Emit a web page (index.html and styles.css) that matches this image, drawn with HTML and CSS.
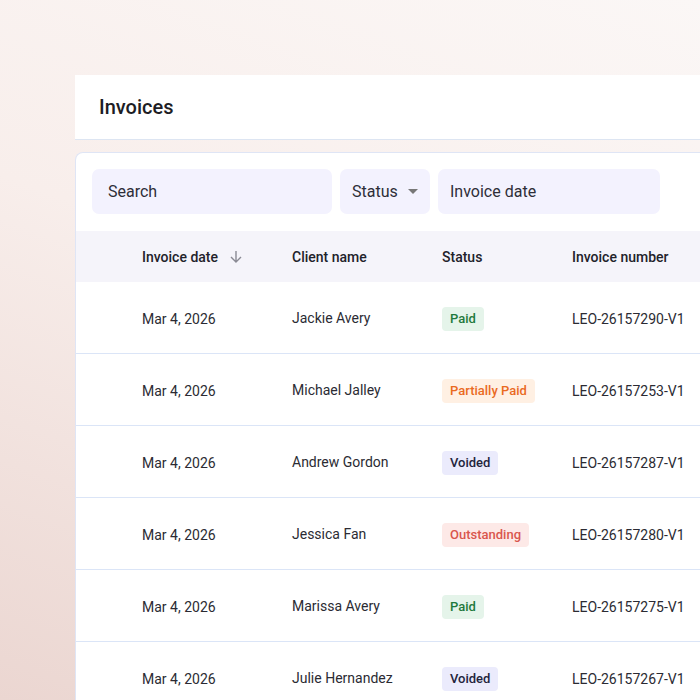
FILE: index.html
```html
<!DOCTYPE html>
<html lang="en">
<head>
    <meta charset="UTF-8">
    <meta name="viewport" content="width=device-width, initial-scale=1.0">
    <title>Invoices</title>
    <link rel="stylesheet" href="styles.css">
</head>
<body>
    <div class="page">
        <div class="topbar">
            <h1>Invoices</h1>
        </div>
        <div class="card">
            <div class="filters">
                <div class="field search">Search</div>
                <div class="field status">
                    Status
                    <svg width="10" height="6" viewBox="0 0 10 6"><path d="M0 0h10L5 5z" fill="#777"/></svg>
                </div>
                <div class="field date">Invoice date</div>
            </div>
            <div class="table">
                <div class="row head">
                    <div class="cell sortable">
                        Invoice date
                        <svg width="14" height="14" viewBox="0 0 14 14"><path d="M7 1v11M2 7l5 5 5-5" fill="none" stroke="#8a8a94" stroke-width="1.4"/></svg>
                    </div>
                    <div class="cell">Client name</div>
                    <div class="cell">Status</div>
                    <div class="cell">Invoice number</div>
                </div>
                <div class="row">
                    <div class="cell">Mar 4, 2026</div>
                    <div class="cell name">Jackie Avery</div>
                    <div class="cell"><span class="badge paid">Paid</span></div>
                    <div class="cell">LEO-26157290-V1</div>
                </div>
                <div class="row">
                    <div class="cell">Mar 4, 2026</div>
                    <div class="cell name">Michael Jalley</div>
                    <div class="cell"><span class="badge partial">Partially Paid</span></div>
                    <div class="cell">LEO-26157253-V1</div>
                </div>
                <div class="row">
                    <div class="cell">Mar 4, 2026</div>
                    <div class="cell name">Andrew Gordon</div>
                    <div class="cell"><span class="badge voided">Voided</span></div>
                    <div class="cell">LEO-26157287-V1</div>
                </div>
                <div class="row">
                    <div class="cell">Mar 4, 2026</div>
                    <div class="cell name">Jessica Fan</div>
                    <div class="cell"><span class="badge outstanding">Outstanding</span></div>
                    <div class="cell">LEO-26157280-V1</div>
                </div>
                <div class="row">
                    <div class="cell">Mar 4, 2026</div>
                    <div class="cell name">Marissa Avery</div>
                    <div class="cell"><span class="badge paid">Paid</span></div>
                    <div class="cell">LEO-26157275-V1</div>
                </div>
                <div class="row">
                    <div class="cell">Mar 4, 2026</div>
                    <div class="cell name">Julie Hernandez</div>
                    <div class="cell"><span class="badge voided">Voided</span></div>
                    <div class="cell">LEO-26157267-V1</div>
                </div>
            </div>
        </div>
    </div>
</body>
</html>
```

FILE: styles.css
```css
body {
    margin: 0;
    width: 700px;
    height: 700px;
    overflow: hidden;
    font-family: Roboto, "Liberation Sans", sans-serif;
    color: #2b2b33;
    background: linear-gradient(200deg, #fbf7f6 0%, #f8eeeb 45%, #ebd6d1 100%);
}
.page {
    padding: 75px 0 0 75px;
}
.topbar {
    height: 64px;
    background-color: white;
    border-bottom: 1px solid #dde5f2;
    display: flex;
    align-items: center;
    padding-left: 24px;
}
h1 {
    margin: 0;
    font-size: 20px;
    font-weight: 500;
    color: #1d1d24;
}
.card {
    margin-top: 12px;
    background-color: white;
    border: 1px solid #dfe5f5;
    border-right: none;
    border-radius: 8px 0 0 0;
}
.filters {
    display: flex;
    gap: 8px;
    padding: 16px 16px 17px;
}
.field {
    height: 45px;
    display: flex;
    align-items: center;
    gap: 10px;
    background-color: #f3f2fe;
    border-radius: 7px;
    font-size: 16px;
    color: #2e2e38;
    box-sizing: border-box;
    padding: 0 12px;
}
.search {
    width: 240px;
    padding-left: 16px;
}
.status {
    width: 90px;
}
.date {
    width: 222px;
}
.row {
    display: grid;
    grid-template-columns: 150px 150px 130px 1fr;
    padding-left: 66px;
    height: 72px;
    box-sizing: border-box;
    padding-top: 2px;
    align-items: center;
    border-bottom: 1px solid #dbe5f7;
    font-size: 14px;
    white-space: nowrap;
}
.row.head {
    height: 51px;
    padding-top: 0;
    background-color: #f5f4fa;
    border-bottom: none;
    font-weight: 500;
    color: #22222a;
}
.cell {
    display: flex;
    align-items: center;
}
.sortable {
    gap: 11px;
}
.name {
    margin-top: -2px;
}
.badge {
    display: inline-block;
    height: 24px;
    line-height: 24px;
    padding: 0 8px;
    border-radius: 4px;
    font-size: 13px;
    font-weight: 500;
}
.paid {
    background-color: #e5f4ea;
    color: #1f7a3c;
}
.partial {
    background-color: #fff0e3;
    color: #ea6a1f;
}
.voided {
    background-color: #ebebfc;
    color: #23243d;
}
.outstanding {
    background-color: #fde9e7;
    color: #d9564d;
}
```
